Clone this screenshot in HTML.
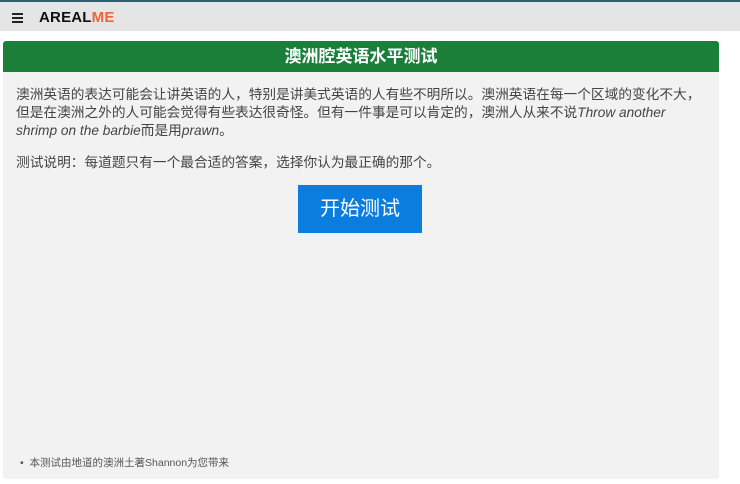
<!DOCTYPE html><html><head><meta charset="utf-8"><style>
body{margin:0;width:740px;height:484px;background:#fff;font-family:"Liberation Sans","Noto Sans CJK SC",sans-serif;position:relative;overflow:hidden}
.top{position:absolute;left:0;top:0;width:740px;height:31px;background:#e5e5e5;border-top:2px solid #2f5f6a;box-sizing:border-box}
.ham{position:absolute;left:12px;top:11px;width:11px}
.ham i{display:block;height:2px;background:#222;margin-bottom:2px}
.logo{position:absolute;left:39px;top:7px;font-weight:bold;font-size:15px;letter-spacing:.2px;color:#111}
.logo span{color:#f0643c}
.panel{position:absolute;left:3px;top:41px;width:716px;height:438px;background:#f2f2f2;border-radius:3px}
.hd{height:31px;background:#1b7e39;border-radius:3px 3px 0 0;color:#fff;font-weight:bold;font-size:17px;text-align:center;line-height:31px}
p{margin:0;position:absolute;left:13px;width:702px;font-size:13.7px;line-height:18px;color:#444}
.btn{position:absolute;left:295px;top:144px;width:124px;height:48px;background:#0b7ddf;color:#fff;font-size:20px;text-align:center;line-height:48px}
.ft{position:absolute;left:17px;top:414px;font-size:10.5px;color:#555}
</style></head><body>
<div class="top"><div class="ham"><i></i><i></i><i></i></div><div class="logo">AREAL<span>ME</span></div></div>
<div class="panel"><div class="hd">澳洲腔英语水平测试</div>
<p style="top:45px">澳洲英语的表达可能会让讲英语的人，特别是讲美式英语的人有些不明所以。澳洲英语在每一个区域的变化不大，<br>但是在澳洲之外的人可能会觉得有些表达很奇怪。但有一件事是可以肯定的，澳洲人从来不说<i>Throw another</i><br><i>shrimp on the barbie</i>而是用<i>prawn</i>。</p>
<p style="top:113px">测试说明：每道题只有一个最合适的答案，选择你认为最正确的那个。</p>
<div class="btn">开始测试</div>
<div class="ft">•&nbsp; 本测试由地道的澳洲土著Shannon为您带来</div>
</div>
</body></html>
